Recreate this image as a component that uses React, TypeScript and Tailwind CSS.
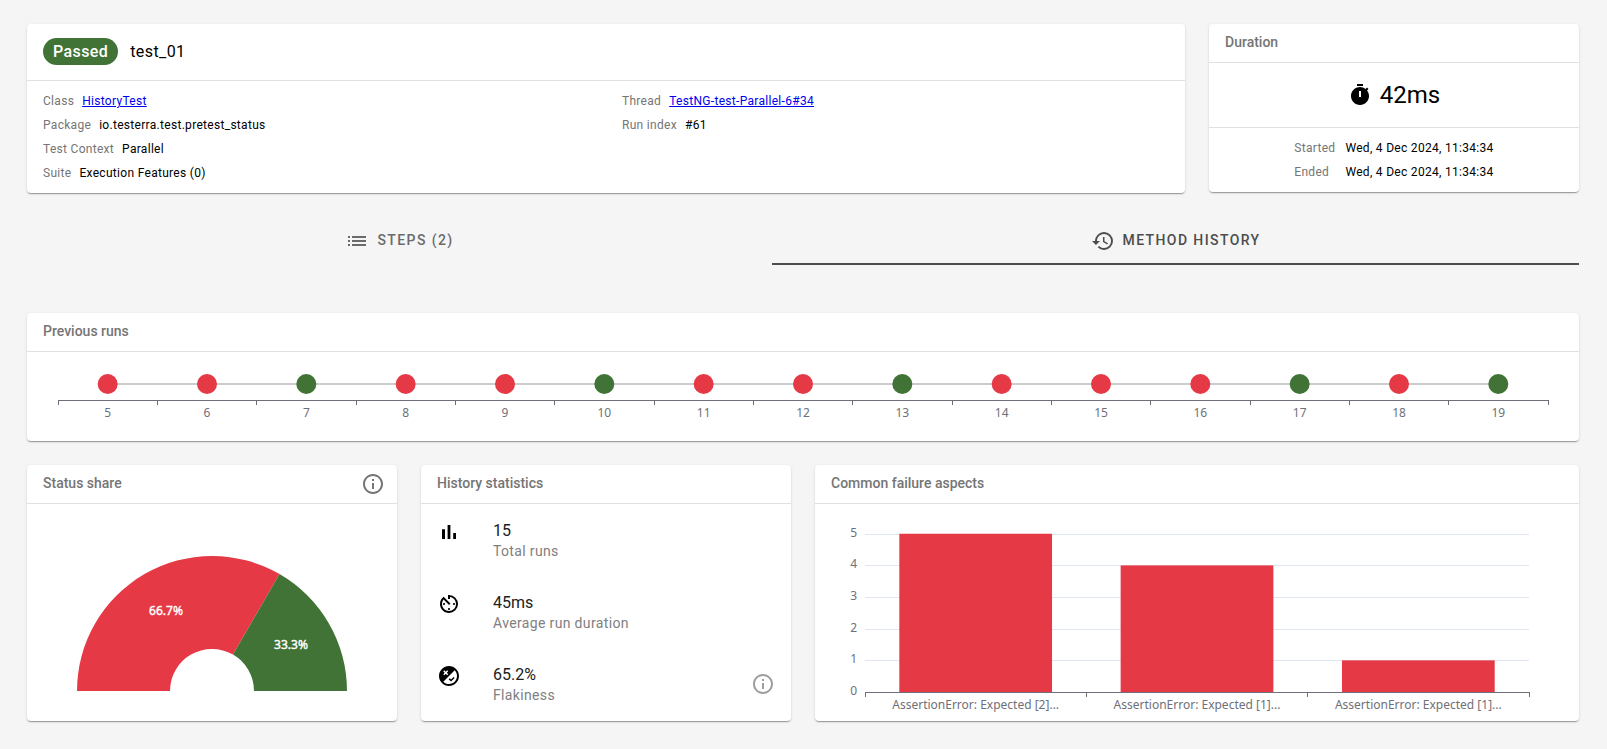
import type { ReactNode } from 'react';
import { MdAvTimer, MdFlaky, MdHistory, MdInfoOutline, MdList } from 'react-icons/md';

const RED = '#e63946';
const GREEN = '#417336';

const runs = [
  { index: 5, passed: false },
  { index: 6, passed: false },
  { index: 7, passed: true },
  { index: 8, passed: false },
  { index: 9, passed: false },
  { index: 10, passed: true },
  { index: 11, passed: false },
  { index: 12, passed: false },
  { index: 13, passed: true },
  { index: 14, passed: false },
  { index: 15, passed: false },
  { index: 16, passed: false },
  { index: 17, passed: true },
  { index: 18, passed: false },
  { index: 19, passed: true },
];

const failures = [
  { label: 'AssertionError: Expected [2]...', count: 5 },
  { label: 'AssertionError: Expected [1]...', count: 4 },
  { label: 'AssertionError: Expected [1]...', count: 1 },
];

function Card({ className = '', children }: { className?: string; children: ReactNode }) {
  return (
    <section
      className={`rounded bg-white shadow-[0_2px_1px_-1px_rgba(0,0,0,0.2),0_1px_1px_0_rgba(0,0,0,0.14),0_1px_3px_0_rgba(0,0,0,0.12)] ${className}`}
    >
      {children}
    </section>
  );
}

function CardHeader({ title, action }: { title: string; action?: ReactNode }) {
  return (
    <header className="flex h-[39px] items-center justify-between border-b border-[#e0e0e0] pr-3 pl-4">
      <h2 className="pb-0.5 text-sm font-medium text-[#757575]">{title}</h2>
      {action}
    </header>
  );
}

function Field({ label, children }: { label: string; children: ReactNode }) {
  return (
    <div className="flex gap-2">
      <dt className="text-[#757575]">{label}</dt>
      <dd>{children}</dd>
    </div>
  );
}

function TimerIcon() {
  return (
    <svg viewBox="0 0 24 24" className="size-6" fill="currentColor" aria-hidden="true">
      <path d="M9 1h6v2H9zM19.03 7.39l1.42-1.42c-.43-.51-.9-.99-1.41-1.41l-1.42 1.42C16.07 4.74 14.12 4 12 4c-4.97 0-9 4.03-9 9s4.02 9 9 9 9-4.03 9-9c0-2.12-.74-4.07-1.97-5.61zM13 14h-2V8h2v6z" />
    </svg>
  );
}

function BarsIcon() {
  return (
    <svg viewBox="0 0 24 24" className="size-6" fill="currentColor" aria-hidden="true">
      <path d="M5 9.2h3V19H5zM10.6 5h2.8v14h-2.8zM16.2 13H19v6h-2.8z" />
    </svg>
  );
}

function RunTimeline() {
  const step = 100 / runs.length;
  const center = (i: number) => `${(i + 0.5) * step}%`;
  return (
    <div className="px-[31px]">
      <svg className="block h-[89px] w-full overflow-visible" role="img" aria-label="Previous runs">
        <line x1={center(0)} x2={center(runs.length - 1)} y1="32" y2="32" stroke="#cccccc" strokeWidth="2" />
        <g stroke="#6e7079" shapeRendering="crispEdges">
          <line x1="0" x2="100%" y1="48.5" y2="48.5" />
          {Array.from({ length: runs.length + 1 }, (_, i) => (
            <line key={i} x1={`${i * step}%`} x2={`${i * step}%`} y1="48" y2="53" />
          ))}
        </g>
        {runs.map((run, i) => (
          <g key={run.index}>
            <circle cx={center(i)} cy="32" r="10" fill={run.passed ? GREEN : RED} />
            <text
              x={center(i)}
              y="65"
              textAnchor="middle"
              fill="#6e7079"
              className="font-['Noto_Sans',sans-serif] text-xs"
            >
              {run.index}
            </text>
          </g>
        ))}
      </svg>
    </div>
  );
}

function StatusShare() {
  return (
    <svg viewBox="0 0 370 217" className="mx-auto block h-[217px]" role="img" aria-label="Status share">
      <path d="M50 187A135 135 0 0 1 252.5 70.1L206 150.6A42 42 0 0 0 143 187Z" fill={RED} />
      <path d="M252.5 70.1A135 135 0 0 1 320 187H227A42 42 0 0 0 206 150.6Z" fill={GREEN} />
      <g
        fill="#ffffff"
        stroke="#ffffff"
        strokeWidth="0.4"
        textAnchor="middle"
        className="font-['Noto_Sans',sans-serif] text-xs"
      >
        <text x="139" y="111">66.7%</text>
        <text x="264" y="145">33.3%</text>
      </g>
    </svg>
  );
}

function FailureChart() {
  const band = 100 / failures.length;
  const baseline = 188;
  const unit = 31.65;
  return (
    <div className="px-[50px]">
      <svg className="block h-[217px] w-full overflow-visible" role="img" aria-label="Common failure aspects">
        {[0, 1, 2, 3, 4, 5].map((n) => {
          const y = Math.round(baseline - n * unit) + 0.5;
          return (
            <g key={n}>
              <line x1="0" x2="100%" y1={y} y2={y} stroke="#e0e6f1" shapeRendering="crispEdges" />
              <text
                x="-8"
                y={y + 2.5}
                textAnchor="end"
                fill="#6e7079"
                className="font-['Noto_Sans',sans-serif] text-xs"
              >
                {n}
              </text>
            </g>
          );
        })}
        {failures.map((f, i) => (
          <g key={i}>
            <rect
              x={`${(i + 0.155) * band}%`}
              y={baseline - f.count * unit}
              width={`${band * 0.69}%`}
              height={f.count * unit}
              fill={RED}
            />
            <text
              x={`${(i + 0.5) * band}%`}
              y="205"
              textAnchor="middle"
              fill="#6e7079"
              className="font-['Noto_Sans',sans-serif] text-xs"
            >
              {f.label}
            </text>
          </g>
        ))}
        <g stroke="#6e7079" shapeRendering="crispEdges">
          <line x1="0" x2="100%" y1="188.5" y2="188.5" />
          {[0, 1, 2, 3].map((i) => (
            <line key={i} x1={`${i * band}%`} x2={`${i * band}%`} y1="188" y2="193" />
          ))}
        </g>
      </svg>
    </div>
  );
}

function Stat({ icon, value, label, action }: { icon: ReactNode; value: string; label: string; action?: ReactNode }) {
  return (
    <li className="flex h-[72px] items-center px-4">
      <span className="self-start pt-4 text-2xl text-black">{icon}</span>
      <div className="ml-8 flex-1 self-start pt-[15px]">
        <p className="text-base leading-6 text-[#212121]">{value}</p>
        <p className="text-sm leading-4 tracking-wide text-[#808080]">{label}</p>
      </div>
      {action}
    </li>
  );
}

export default function App() {
  return (
    <main className="flex min-h-screen flex-col bg-[#f5f5f5] py-6 pr-7 pl-[27px] font-['Roboto',sans-serif] text-black">
      <div className="grid grid-cols-12 items-start gap-6">
        <Card className="col-span-9">
          <header className="flex h-[57px] items-center gap-3 border-b border-[#e0e0e0] px-4 pb-0.5 tracking-wide">
            <span className="rounded-full bg-[#417336] px-2.5 py-0.5 text-base leading-[23px] font-medium text-white">
              Passed
            </span>
            <h1 className="text-base leading-[27px]">test_01</h1>
          </header>
          <div className="grid grid-cols-2 py-2 text-xs leading-6 tracking-wide">
            <dl className="px-4">
              <Field label="Class">
                <a href="#class" className="text-[#0000ee] underline">HistoryTest</a>
              </Field>
              <Field label="Package">io.testerra.test.pretest_status</Field>
              <Field label="Test Context">Parallel</Field>
              <Field label="Suite">Execution Features (0)</Field>
            </dl>
            <dl className="px-4">
              <Field label="Thread">
                <a href="#thread" className="text-[#0000ee] underline">TestNG-test-Parallel-6#34</a>
              </Field>
              <Field label="Run index">#61</Field>
            </dl>
          </div>
        </Card>

        <Card className="col-span-3">
          <CardHeader title="Duration" />
          <div className="flex h-[65px] items-center justify-center gap-2 border-b border-[#e0e0e0] text-2xl">
            <TimerIcon />
            <span>42ms</span>
          </div>
          <dl className="grid grid-cols-[auto_auto] justify-center gap-x-2.5 py-2 text-xs leading-6 tracking-wide">
            <dt className="text-[#757575]">Started</dt>
            <dd>Wed, 4 Dec 2024, 11:34:34</dd>
            <dt className="text-[#757575]">Ended</dt>
            <dd>Wed, 4 Dec 2024, 11:34:34</dd>
          </dl>
        </Card>
      </div>

      <div role="tablist" className="mt-6 flex text-sm font-medium tracking-widest">
        <button
          type="button"
          role="tab"
          aria-selected="false"
          className="flex h-12 flex-auto items-center justify-center gap-2 px-6 text-[#6b6b6b]"
        >
          <MdList className="size-6" />
          <span className="pb-0.5">STEPS (2)</span>
        </button>
        <button
          type="button"
          role="tab"
          aria-selected="true"
          className="flex h-12 flex-auto items-center justify-center gap-2 px-6 text-[#4d4d4d] shadow-[inset_0_-2px_0_#4d4d4d]"
        >
          <MdHistory className="size-6" />
          <span className="pb-0.5">METHOD HISTORY</span>
        </button>
      </div>

      <Card className="mt-12">
        <CardHeader title="Previous runs" />
        <RunTimeline />
      </Card>

      <div className="mt-6 grid grid-cols-12 gap-6">
        <Card className="col-span-3">
          <CardHeader
            title="Status share"
            action={
              <button type="button" aria-label="About status share" className="text-2xl text-[#757575]">
                <MdInfoOutline />
              </button>
            }
          />
          <StatusShare />
        </Card>

        <Card className="col-span-3">
          <CardHeader title="History statistics" />
          <ul>
            <Stat icon={<BarsIcon />} value="15" label="Total runs" />
            <Stat icon={<MdAvTimer />} value="45ms" label="Average run duration" />
            <Stat
              icon={<MdFlaky />}
              value="65.2%"
              label="Flakiness"
              action={
                <button type="button" aria-label="About flakiness" className="text-2xl text-[#9e9e9e]">
                  <MdInfoOutline />
                </button>
              }
            />
          </ul>
        </Card>

        <Card className="col-span-6">
          <CardHeader title="Common failure aspects" />
          <FailureChart />
        </Card>
      </div>
    </main>
  );
}
